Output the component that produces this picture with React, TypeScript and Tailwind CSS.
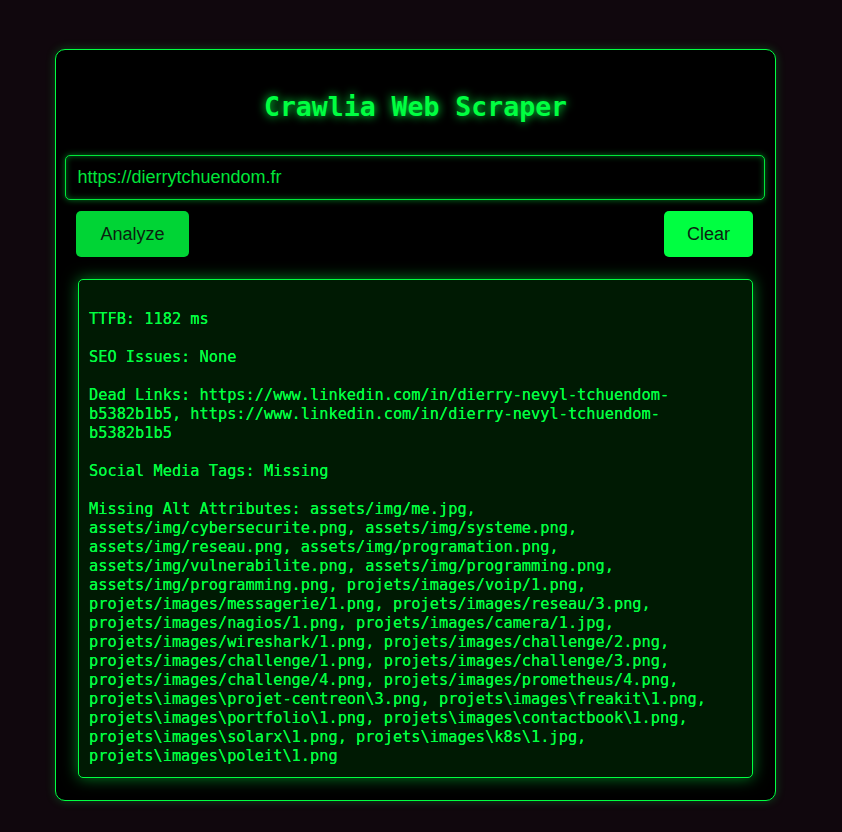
import React from "react";

const lines: string[] = [
  "",
  "TTFB: 1182 ms",
  "",
  "SEO Issues: None",
  "",
  "Dead Links: https://www.linkedin.com/in/dierry-nevyl-tchuendom-b5382b1b5, https://www.linkedin.com/in/dierry-nevyl-tchuendom-b5382b1b5",
  "",
  "Social Media Tags: Missing",
  "",
  "Missing Alt Attributes: assets/img/me.jpg, assets/img/cybersecurite.png, assets/img/systeme.png, assets/img/reseau.png, assets/img/programation.png, assets/img/vulnerabilite.png, assets/img/programming.png, assets/img/programming.png, projets/images/voip/1.png, projets/images/messagerie/1.png, projets/images/reseau/3.png, projets/images/nagios/1.png, projets/images/camera/1.jpg, projets/images/wireshark/1.png, projets/images/challenge/2.png, projets/images/challenge/1.png, projets/images/challenge/3.png, projets/images/challenge/4.png, projets/images/prometheus/4.png, projets\\images\\projet-centreon\\3.png, projets\\images\\freakit\\1.png, projets\\images\\portfolio\\1.png, projets\\images\\contactbook\\1.png, projets\\images\\solarx\\1.png, projets\\images\\k8s\\1.jpg, projets\\images\\poleit\\1.png",
];

export default function App() {
  return (
    <div className="min-h-screen bg-[#10070d] pt-[49px] pl-[55px] pb-[32px]">
      <div className="flex w-[721px] flex-col items-center rounded-[10px] border border-[#00ff41] bg-black pb-[22px] shadow-[0_0_10px_rgba(0,255,65,0.25)]">
        <h1 className="mt-[42px] font-['DejaVu_Sans_Mono',monospace] text-[26.5px] font-bold leading-[30px] text-[#00ff41] [text-shadow:0_0_10px_#00ff41]">
          Crawlia Web Scraper
        </h1>
        <div className="mt-[33px] flex h-[45px] w-[700px] -translate-x-px items-center rounded-[5px] border border-[#00e63a] bg-black pl-[12px] shadow-[0_0_6px_rgba(0,255,65,0.45),inset_0_0_6px_rgba(0,255,65,0.4)]">
          <span className="font-['Liberation_Sans',Arial,sans-serif] text-[18px] text-[#00e63a]">
            https://dierrytchuendom.fr
          </span>
        </div>
        <div className="mt-[11px] flex w-[677px] -translate-x-px items-center justify-between">
          <button className="flex h-[46px] w-[113px] items-center justify-center rounded-[5px] bg-[#00d435] font-['Liberation_Sans',Arial,sans-serif] text-[18px] text-[#0b1f10]">
            Analyze
          </button>
          <button className="flex h-[46px] w-[89px] items-center justify-center rounded-[5px] bg-[#00ff41] font-['Liberation_Sans',Arial,sans-serif] text-[18px] text-[#0b1f10]">
            Clear
          </button>
        </div>
        <div className="mt-[22px] w-[675px] rounded-[5px] border border-[#00ff41] bg-[#001a03] pt-[11px] pb-[11px] pl-[10px] pr-[23px] shadow-[0_0_15px_rgba(0,255,65,0.5)]">
          <pre className="whitespace-pre-wrap break-words font-['DejaVu_Sans_Mono',monospace] text-[15.3px] leading-[19px] text-[#00ff41] [text-shadow:0_0_0.6px_#00ff41]">
            {lines.join("\n")}
          </pre>
        </div>
      </div>
    </div>
  );
}
